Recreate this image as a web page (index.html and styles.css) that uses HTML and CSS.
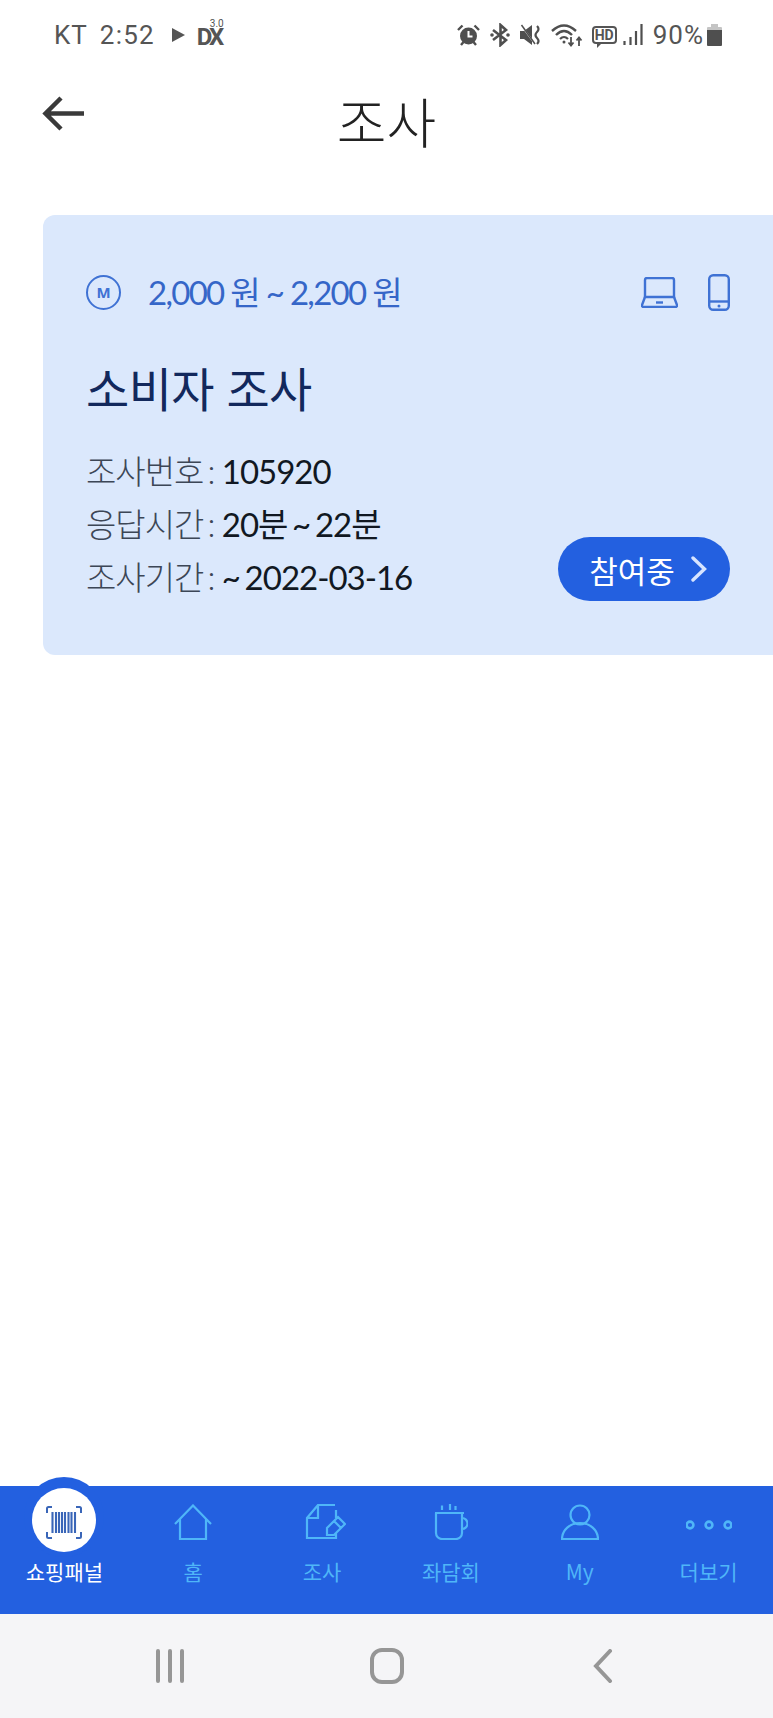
FILE: index.html
```html
<!DOCTYPE html>
<html lang="ko">
<head>
  <meta charset="UTF-8" />
  <meta name="viewport" content="width=device-width, initial-scale=1.0" />
  <title>조사</title>
  <link rel="stylesheet" href="styles.css">
</head>
<body>
  <div class="screen">
    <div class="status-bar">
      <div class="status-left">
        <span class="carrier">KT</span>
        <span class="clock">2:52</span>
        <svg class="play" width="13" height="14" viewBox="0 0 13 14"><path d="M0 0 L13 7 L0 14 Z"/></svg>
        <span class="dx">
          <span class="dx-main">DX</span><span class="dx-ver">3.0</span>
        </span>
      </div>
      <div class="status-right">
        <svg width="23" height="22" viewBox="0 0 23 22"><circle cx="11.500" cy="12" r="8.500" fill="#4f4f4f"/><path d="M11.500 7v5.500h4" fill="none" stroke="#fff" stroke-width="2"/><path d="M1 6 L5.500 1.500 M22 6 L17.500 1.500 M4 21 L6.500 18 M19 21 L16.500 18" stroke="#4f4f4f" stroke-width="2.400" fill="none"/></svg>
        <svg width="20" height="24" viewBox="0 0 20 24"><path d="M3 7 L16 17 L10.500 22 V2 L16 7 L3 17" fill="none" stroke="#4f4f4f" stroke-width="2.600"/><circle cx="2" cy="12" r="1.800" fill="#4f4f4f"/><circle cx="18" cy="12" r="1.800" fill="#4f4f4f"/></svg>
        <svg width="21" height="22" viewBox="0 0 21 22"><path d="M0 7 H4 L12 1 V21 L4 15 H0 Z" fill="#4f4f4f"/><path d="M1 1 L15 20" stroke="#fff" stroke-width="1.500"/><path d="M1.500 1 L15 20" stroke="#4f4f4f" stroke-width="1.500"/><path d="M17 2 q3 3 0 6 q-3 3 0 6 q3 3 0 6" fill="none" stroke="#4f4f4f" stroke-width="2.200"/></svg>
        <svg width="32" height="24" viewBox="0 0 32 24"><path d="M1 8 Q13 -3 25 8" fill="none" stroke="#4f4f4f" stroke-width="2.400"/><path d="M5 12 Q13 4 21 12" fill="none" stroke="#4f4f4f" stroke-width="2.400"/><path d="M9 16 Q13 12 17 16" fill="none" stroke="#4f4f4f" stroke-width="2.200"/><circle cx="13" cy="19" r="1.500" fill="#4f4f4f"/><path d="M20 14v8 M17.500 19.500 L20 22.500 L22.500 19.500 M28 23v-8 M25.500 17.500 L28 14.500 L30.500 17.500" fill="none" stroke="#4f4f4f" stroke-width="1.800"/></svg>
        <span class="hd">HD</span>
        <svg class="signal" width="20" height="22" viewBox="0 0 20 22"><path d="M1.500 17v4 M7.500 13v8 M13 7v14 M18.500 0v21" stroke="#4f4f4f" stroke-width="2.200"/></svg>
        <span class="battery-text">90%</span>
        <svg width="15" height="22" viewBox="0 0 15 22"><path d="M4 0h7v3h3a1 1 0 0 1 1 1v3H0V4a1 1 0 0 1 1-1h3z" fill="#c4c4c4"/><path d="M0 6h15v15a1 1 0 0 1-1 1H1a1 1 0 0 1-1-1z" fill="#4f4f4f"/></svg>
      </div>
    </div>

    <div class="header">
      <svg class="back-arrow" width="44" height="36" viewBox="0 0 44 36"><path d="M42 17.500H4 M19 2 L3.500 17.500 L19 33" fill="none" stroke="#3a3a3a" stroke-width="4.500"/></svg>
      <h1 class="page-title">조사</h1>
    </div>

    <div class="content">
      <div class="survey-card">
        <div class="card-top">
          <div class="reward">
            <span class="reward-badge">M</span>
            <span class="reward-text">2,000 원 ~ 2,200 원</span>
          </div>
          <div class="devices">
            <svg width="37" height="31" viewBox="0 0 37 31"><path d="M4 21V3a2 2 0 0 1 2-2h25a2 2 0 0 1 2 2v18" fill="none" stroke="#3f72d4" stroke-width="2.400"/><path d="M4 20h29l3 8a1.500 1.500 0 0 1-1.500 2h-32a1.500 1.500 0 0 1-1.500-2z" fill="none" stroke="#3f72d4" stroke-width="2.400"/><path d="M15 25.500h7" stroke="#3f72d4" stroke-width="2.400"/></svg>
            <svg width="22" height="37" viewBox="0 0 22 37"><rect x="1.200" y="1.200" width="19.600" height="34.600" rx="4" fill="none" stroke="#3f72d4" stroke-width="2.400"/><path d="M1 27.500h20" stroke="#3f72d4" stroke-width="2.400"/><circle cx="11" cy="32" r="1.500" fill="#3f72d4"/></svg>
          </div>
        </div>
        <h2 class="card-title">소비자 조사</h2>
        <div class="card-bottom">
          <div class="card-info">
            <div class="info-row"><span class="info-label">조사번호 :</span> <span class="info-value">105920</span></div>
            <div class="info-row"><span class="info-label">응답시간 :</span> <span class="info-value">20분 ~ 22분</span></div>
            <div class="info-row"><span class="info-label">조사기간 :</span> <span class="info-value">~ 2022-03-16</span></div>
          </div>
          <button class="join-btn">
            <span>참여중</span>
            <svg width="16" height="26" viewBox="0 0 16 26"><path d="M2 2 L13.500 13 L2 24" fill="none" stroke="#d7e4ff" stroke-width="3.400" stroke-linecap="round"/></svg>
          </button>
        </div>
      </div>
    </div>

    <nav class="tab-bar">
      <div class="tab active">
        <span class="tab-bump"></span>
        <span class="tab-circle"></span>
        <div class="tab-icon">
          <svg width="36" height="33" viewBox="0 0 36 33"><path d="M1 7V2.500A1.500 1.500 0 0 1 2.500 1H6 M30 1h3.500A1.500 1.500 0 0 1 35 2.500V7 M1 26v4.500A1.500 1.500 0 0 0 2.500 32H6 M30 32h3.500a1.500 1.500 0 0 0 1.500-1.500V26" fill="none" stroke="#3a66b8" stroke-width="2"/><path d="M6.500 6v21 M10 6v21 M13 6v21 M16 6v21 M19 6v21 M22.500 6v21 M25.500 6v21 M29 6v21" stroke="#3a66b8" stroke-width="2.100"/></svg>
        </div>
        <span class="tab-label">쇼핑패널</span>
      </div>
      <div class="tab">
        <div class="tab-icon">
          <svg width="38" height="36" viewBox="0 0 38 36"><path d="M1 20 L19 1.500 L37 20 M6 15.500V35H32V15.500" fill="none" stroke="#4fb6f8" stroke-width="2.200"/></svg>
        </div>
        <span class="tab-label">홈</span>
      </div>
      <div class="tab">
        <div class="tab-icon">
          <svg width="48" height="36" viewBox="-8 0 48 36"><path d="M29 1H12L1 14V34H30V29 M30 6V14 M12 1V14H1" fill="none" stroke="#4fb6f8" stroke-width="2.200"/><path d="M32 13 L39 20 L28 31 L21 31 L21 24 Z M28 17 L35 24" fill="none" stroke="#4fb6f8" stroke-width="2.200"/></svg>
        </div>
        <span class="tab-label">조사</span>
      </div>
      <div class="tab">
        <div class="tab-icon">
          <svg width="34" height="36" viewBox="0 0 34 36"><path d="M1 9H30 M2 9V29a6 6 0 0 0 6 6H22a6 6 0 0 0 6-6V9 M28 14a5.500 5.500 0 0 1 0 11 M8 1.500V6 M16 0V6 M21.500 2V6" fill="none" stroke="#4fb6f8" stroke-width="2.200"/></svg>
        </div>
        <span class="tab-label">좌담회</span>
      </div>
      <div class="tab">
        <div class="tab-icon">
          <svg width="38" height="36" viewBox="0 0 38 36"><circle cx="19" cy="11" r="9.500" fill="none" stroke="#4fb6f8" stroke-width="2.200"/><path d="M1 35a18 16 0 0 1 36 0Z" fill="none" stroke="#4fb6f8" stroke-width="2.200"/></svg>
        </div>
        <span class="tab-label">My</span>
      </div>
      <div class="tab">
        <div class="tab-icon">
          <svg width="46" height="36" viewBox="0 0 46 36"><circle cx="4" cy="21" r="3.400" fill="none" stroke="#4fb6f8" stroke-width="2.600"/><circle cx="23" cy="21" r="3.400" fill="none" stroke="#4fb6f8" stroke-width="2.600"/><circle cx="42" cy="21" r="3.400" fill="none" stroke="#4fb6f8" stroke-width="2.600"/></svg>
        </div>
        <span class="tab-label">더보기</span>
      </div>
    </nav>

    <div class="system-bar">
      <svg width="30" height="34" viewBox="0 0 30 34"><path d="M3 2v30 M15 2v30 M27 2v30" stroke="#969696" stroke-width="4" stroke-linecap="round"/></svg>
      <svg width="34" height="36" viewBox="0 0 34 36"><rect x="2" y="2" width="30" height="32" rx="10" fill="none" stroke="#969696" stroke-width="4"/></svg>
      <svg width="20" height="34" viewBox="0 0 20 34"><path d="M17 2 L3 17 L17 32" fill="none" stroke="#969696" stroke-width="4" stroke-linecap="round"/></svg>
    </div>
  </div>
</body>
</html>
```

FILE: styles.css
```css
html, body {
  margin: 0;
  padding: 0;
  background: #fff;
}
.screen {
  width: 773px;
  height: 1718px;
  display: flex;
  flex-direction: column;
  overflow: hidden;
  font-family: Lato, "Noto Sans CJK KR", sans-serif;
}
.status-bar {
  height: 70px;
  display: flex;
  justify-content: space-between;
  align-items: center;
  padding: 0 51px 0 54px;
  color: #555;
  font-family: Roboto, "Noto Sans", sans-serif;
  font-size: 26px;
}
.status-left {
  display: flex;
  align-items: center;
}
.carrier {
  letter-spacing: 1px;
  margin-right: 12px;
}
.clock {
  letter-spacing: 1.200px;
  margin-right: 17px;
}
.play {
  fill: #555;
  margin-right: 12px;
}
.dx {
  position: relative;
  display: block;
  width: 28px;
  height: 24px;
}
.dx-main {
  position: absolute;
  left: 0;
  top: 5px;
  font-size: 24px;
  font-weight: 700;
  line-height: 18px;
  letter-spacing: -3px;
}
.dx-ver {
  position: absolute;
  left: 13px;
  top: -4px;
  font-size: 10px;
  line-height: 9px;
}
.status-right {
  display: flex;
  align-items: center;
  gap: 10px;
}
.hd {
  position: relative;
  margin-left: -1px;
  border: 2px solid #555;
  border-radius: 4px;
  font-size: 14px;
  font-weight: 700;
  line-height: 14px;
  padding: 0 1px;
}
.hd::after {
  content: "";
  position: absolute;
  left: 3px;
  bottom: -6px;
  width: 0;
  height: 0;
  border-top: 5px solid #555;
  border-right: 5px solid transparent;
}
.signal {
  margin-left: -4px;
}
.battery-text {
  letter-spacing: 1px;
  margin-right: -7px;
}
.header {
  height: 145px;
  position: relative;
  display: flex;
  justify-content: center;
}
.back-arrow {
  position: absolute;
  left: 42px;
  top: 26px;
}
.page-title {
  margin: 21px 0 0;
  font-family: "Noto Sans CJK KR", sans-serif;
  font-size: 54px;
  font-weight: 300;
  line-height: 60px;
  color: #222;
}
.content {
  flex: 1;
}
.survey-card {
  margin-left: 43px;
  height: 440px;
  box-sizing: border-box;
  padding: 57px 43px 0 43px;
  background: #dbe8fc;
  border-radius: 12px 0 0 12px;
  display: flex;
  flex-direction: column;
}
.card-top {
  display: flex;
  justify-content: space-between;
  align-items: center;
}
.reward {
  display: flex;
  align-items: center;
  gap: 27px;
}
.reward-badge {
  width: 31px;
  height: 31px;
  border: 2px solid #3f72d4;
  border-radius: 50%;
  display: flex;
  align-items: center;
  justify-content: center;
  color: #3f72d4;
  font-family: "Noto Sans", sans-serif;
  font-size: 15px;
  font-weight: 700;
}
.reward-text {
  color: #3566c8;
  font-size: 33px;
  letter-spacing: -1.700px;
  line-height: 40px;
}
.devices {
  display: flex;
  align-items: center;
  gap: 30px;
}
.card-title {
  margin: 45px 0 28px;
  color: #12285c;
  font-family: "Noto Sans CJK KR", sans-serif;
  font-size: 47px;
  font-weight: 400;
  line-height: 60px;
  letter-spacing: -0.600px;
}
.card-bottom {
  display: flex;
  justify-content: space-between;
  align-items: flex-end;
}
.info-row {
  font-size: 33px;
  line-height: 53px;
  letter-spacing: -1px;
  white-space: nowrap;
}
.info-label {
  color: #3c4656;
  font-weight: 300;
  word-spacing: -4px;
}
.info-value {
  color: #111822;
  word-spacing: -2.750px;
}
.join-btn {
  width: 172px;
  height: 64px;
  border: none;
  border-radius: 32px;
  background: #2360e0;
  color: #fff;
  font-family: "Noto Sans CJK KR", sans-serif;
  font-size: 31px;
  display: flex;
  align-items: center;
  justify-content: center;
  gap: 16px;
  padding: 0 0 0 8px;
  margin-bottom: 3px;
}
.tab-bar {
  height: 128px;
  background: #2360e0;
  display: flex;
  font-family: "Noto Sans CJK KR", sans-serif;
}
.tab {
  position: relative;
  flex: 1;
  display: flex;
  flex-direction: column;
  align-items: center;
  padding-top: 18px;
  color: #4fb6f8;
}
.tab.active {
  color: #fff;
}
.tab-bump {
  position: absolute;
  left: 24px;
  top: -9px;
  width: 80px;
  height: 80px;
  border-radius: 50%;
  background: #2360e0;
}
.tab-circle {
  position: absolute;
  left: 32px;
  top: 2px;
  width: 64px;
  height: 64px;
  border-radius: 50%;
  background: #fff;
}
.tab-icon {
  position: relative;
  height: 36px;
  display: flex;
  align-items: center;
  justify-content: center;
}
.tab-label {
  position: relative;
  margin-top: 16px;
  font-size: 21px;
  line-height: 30px;
}
.system-bar {
  height: 104px;
  background: #f5f5f7;
  display: grid;
  grid-template-columns: repeat(3, 216.500px);
  justify-content: center;
  justify-items: center;
  align-items: center;
}
```
